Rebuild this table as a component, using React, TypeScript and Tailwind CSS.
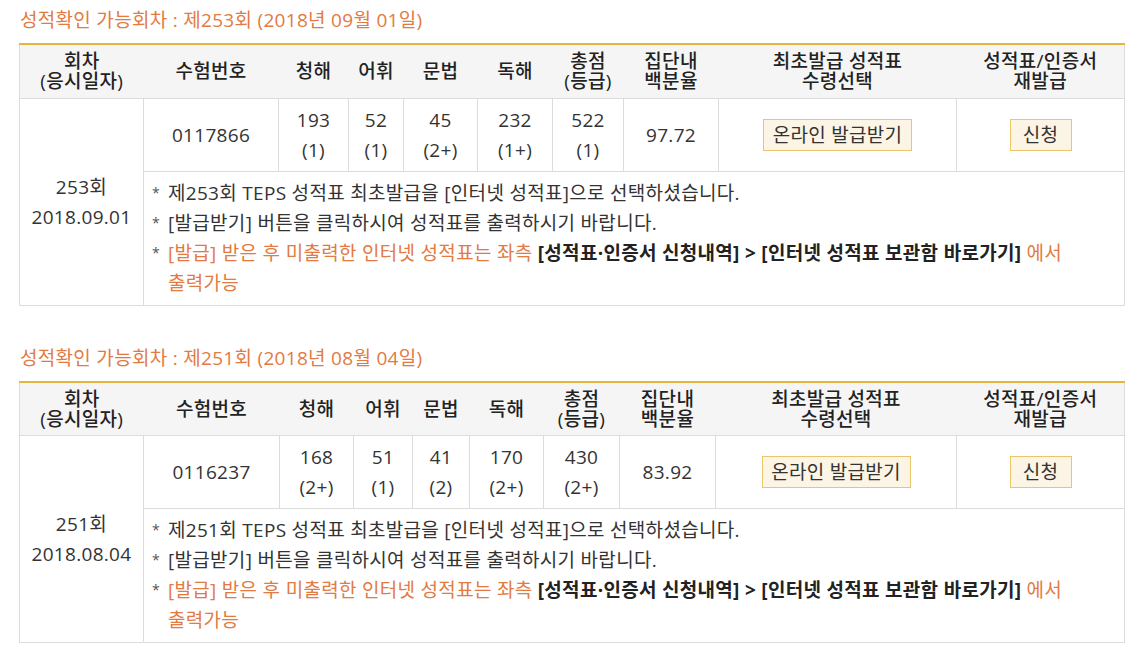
import React from "react";

type Row = {
  round: string;
  date: string;
  title: string;
  no: string;
  scores: [string, string][];
  pct: string;
  widths: number[];
};

const data: Row[] = [
  {
    round: "253",
    date: "2018.09.01",
    title: "성적확인 가능회차 : 제253회 (2018년 09월 01일)",
    no: "0117866",
    scores: [
      ["193", "(1)"],
      ["52", "(1)"],
      ["45", "(2+)"],
      ["232", "(1+)"],
      ["522", "(1)"],
    ],
    pct: "97.72",
    widths: [124, 135, 70, 55, 74, 75, 71, 95, 238, 168],
  },
  {
    round: "251",
    date: "2018.08.04",
    title: "성적확인 가능회차 : 제251회 (2018년 08월 04일)",
    no: "0116237",
    scores: [
      ["168", "(2+)"],
      ["51", "(1)"],
      ["41", "(2)"],
      ["170", "(2+)"],
      ["430", "(2+)"],
    ],
    pct: "83.92",
    widths: [124, 136, 74, 59, 57, 74, 76, 96, 241, 168],
  },
];

function Block({ r }: { r: Row }) {
  const th = "font-medium text-[#222] text-[19px] leading-[20px] py-[6px] px-0 text-center align-middle whitespace-nowrap";
  const td = "border border-[#dcdcdc] text-center align-middle py-[6px] px-0 text-[19px] leading-[30px] text-[#333] whitespace-nowrap";
  return (
    <section className="mb-[38px]">
      <h2 className="text-[19px] tracking-[0.3px] leading-[28px] text-[#e27a42] font-normal mb-[9px] pl-[1px]">{r.title}</h2>
      <table className="table-fixed border-collapse w-[1105px] tracking-[0.3px]">
        <colgroup>
          {r.widths.map((w, i) => (
            <col key={i} style={{ width: w }} />
          ))}
        </colgroup>
        <thead>
          <tr className="bg-[#f5f5f5] border-t-2 border-t-[#e3b63e] border-b border-b-[#dcdcdc] border-x border-x-[#dcdcdc] h-[54px]">
            <th className={th}>
              회차
              <br />
              (응시일자)
            </th>
            <th className={th}>수험번호</th>
            <th className={th}>청해</th>
            <th className={th}>어휘</th>
            <th className={th}>문법</th>
            <th className={th}>독해</th>
            <th className={th}>
              총점
              <br />
              (등급)
            </th>
            <th className={th}>
              집단내
              <br />
              백분율
            </th>
            <th className={th}>
              최초발급 성적표
              <br />
              수령선택
            </th>
            <th className={th}>
              성적표/인증서
              <br />
              재발급
            </th>
          </tr>
        </thead>
        <tbody>
          <tr className="h-[73px]">
            <td rowSpan={2} className={td}>
              {r.round}회
              <br />
              {r.date}
            </td>
            <td className={td}>{r.no}</td>
            {r.scores.map(([a, b], i) => (
              <td key={i} className={td}>
                {a}
                <br />
                {b}
              </td>
            ))}
            <td className={td}>{r.pct}</td>
            <td className={td}>
              <div className="flex justify-center">
                <span className="w-[149px] h-[32px] flex items-center justify-center bg-[#fcf4e4] border border-[#e9c56c] text-[19px] leading-[30px] text-[#333]">
                  온라인 발급받기
                </span>
              </div>
            </td>
            <td className={td}>
              <div className="flex justify-center">
                <span className="w-[62px] h-[32px] flex items-center justify-center bg-[#fcf4e4] border border-[#e9c56c] text-[19px] leading-[30px] text-[#333]">
                  신청
                </span>
              </div>
            </td>
          </tr>
          <tr>
            <td colSpan={9} className="border border-[#dcdcdc] text-left align-top pt-[6px] pb-[7px] pl-[8px] pr-0 text-[19px] leading-[30px] text-[#333]">
              <div className="flex">
                <span className="w-[16px] shrink-0 text-[14px] text-[#555]">*</span>
                <span>제{r.round}회 TEPS 성적표 최초발급을 [인터넷 성적표]으로 선택하셨습니다.</span>
              </div>
              <div className="flex">
                <span className="w-[16px] shrink-0 text-[14px] text-[#555]">*</span>
                <span>[발급받기] 버튼을 클릭하시여 성적표를 출력하시기 바랍니다.</span>
              </div>
              <div className="flex">
                <span className="w-[16px] shrink-0 text-[14px] text-[#555]">*</span>
                <span className="text-[#e27a42] whitespace-nowrap">
                  [발급] 받은 후 미출력한 인터넷 성적표는 좌측{" "}
                  <b className="font-bold text-[#222]">[성적표·인증서 신청내역] &gt; [인터넷 성적표 보관함 바로가기]</b> 에서
                  <br />
                  출력가능
                </span>
              </div>
            </td>
          </tr>
        </tbody>
      </table>
    </section>
  );
}

export default function App() {
  return (
    <div
      className="w-[1144px] h-[655px] bg-white pl-[19px] pt-[6px] overflow-hidden"
      style={{ fontFamily: '"Open Sans", "Noto Sans CJK KR", sans-serif' }}
    >
      {data.map((r) => (
        <Block key={r.round} r={r} />
      ))}
    </div>
  );
}
